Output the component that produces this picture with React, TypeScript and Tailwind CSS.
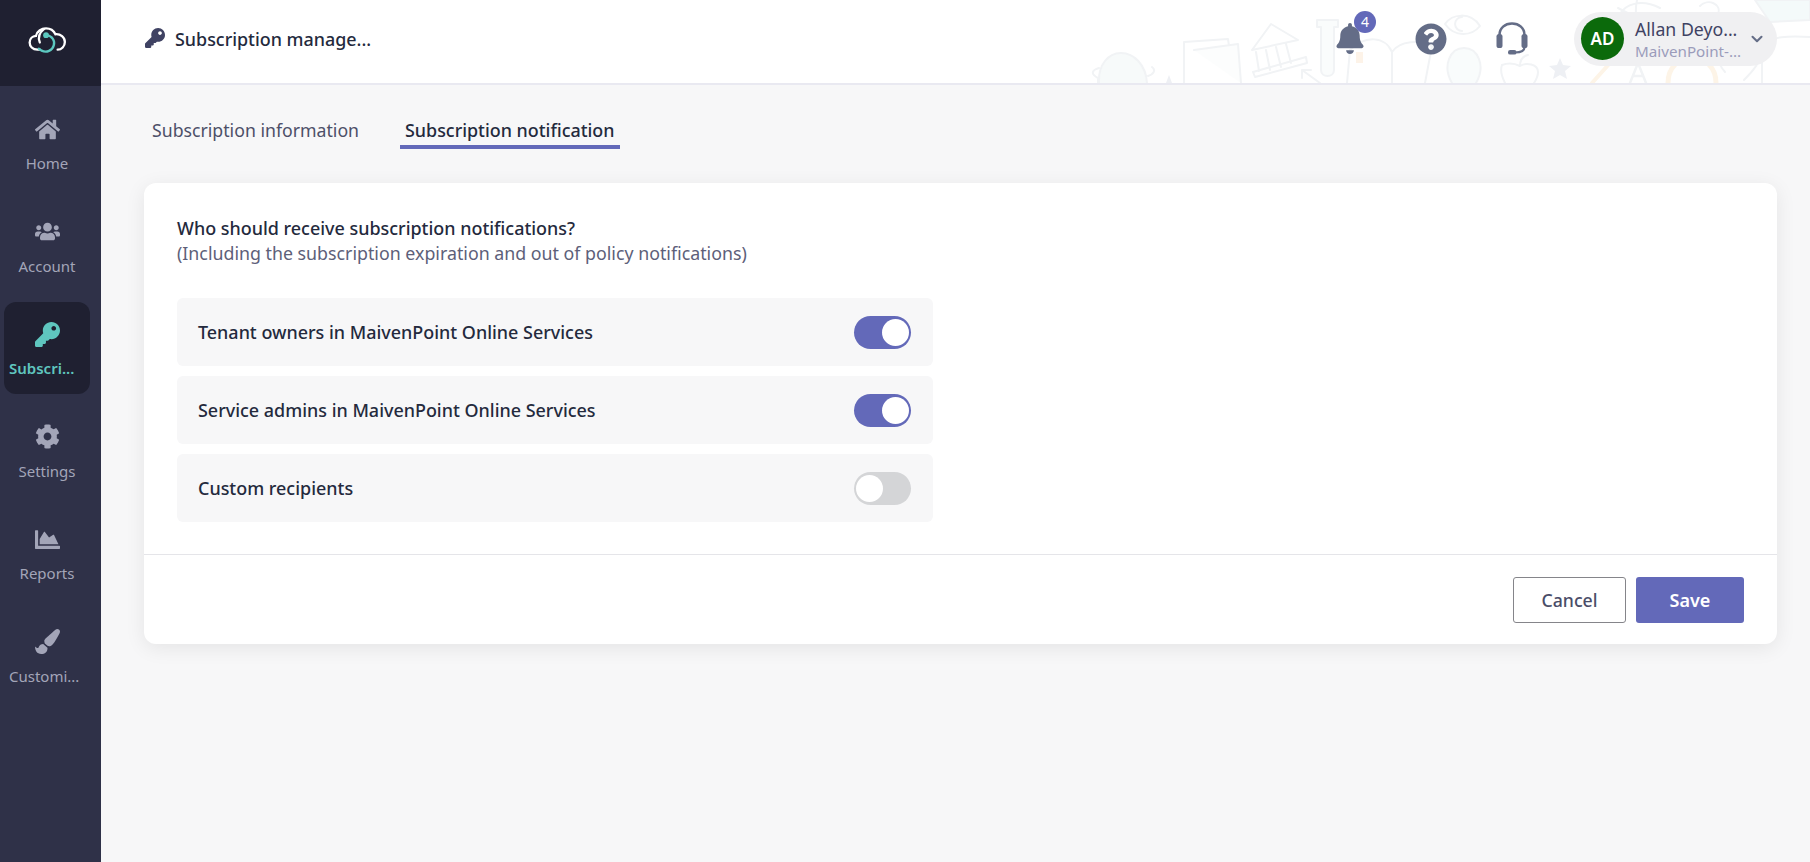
import React from "react";
import { FaHome, FaUsers, FaKey, FaCog, FaChartArea, FaPaintBrush, FaBell, FaQuestionCircle } from "react-icons/fa";
import { LuChevronDown } from "react-icons/lu";

const font = "font-['Noto_Sans','Open_Sans',sans-serif]";

function Logo() {
  return (
    <svg width="39" height="27" viewBox="0 0 40 28" fill="none">
      <path d="M12 23.5 H9.5 C4.5 23.5 1.5 20 1.5 16 C1.5 12 4.5 9.5 8 9.2 C9 4.5 13.5 1.5 18.5 1.5 C23 1.5 26.5 4 28.2 7.5 C33.5 7 38 10.5 38 15.5 C38 20 34.5 23.5 30.5 23.5" stroke="#fff" strokeWidth="2.4" strokeLinecap="round" />
      <path d="M16.5 2 C11.5 6 10 11 12 16" stroke="#fff" strokeWidth="2.4" strokeLinecap="round" />
      <path d="M19 8.5 C25 9.5 28 14 26.5 19 C25 24.5 19 27 14 24.5 L11 22.5" stroke="#5cc8c0" strokeWidth="2.4" strokeLinecap="round" />
      <circle cx="18.5" cy="8.5" r="3" fill="#5cc8c0" />
    </svg>
  );
}

function Headset() {
  return (
    <svg width="32" height="33" viewBox="0 0 32 33" fill="none" className="text-[#646d87] mr-[46px]">
      <path d="M3.5 17 V13 C3.5 6 9 1.5 16 1.5 C23 1.5 28.5 6 28.5 13 V17" stroke="currentColor" strokeWidth="2.6" />
      <rect x="0.5" y="12" width="6" height="14" rx="2.6" fill="currentColor" />
      <rect x="25.5" y="12" width="6" height="14" rx="2.6" fill="currentColor" />
      <path d="M28.5 25 C28.5 29 24 30.5 19 30.5" stroke="currentColor" strokeWidth="2.2" />
      <rect x="12" y="28" width="8.5" height="4.6" rx="2.2" fill="currentColor" />
    </svg>
  );
}

function Doodles() {
  return (
    <svg className="absolute top-0 left-0 pointer-events-none" width="1709" height="83" viewBox="101 0 1709 83" fill="none" strokeWidth="2" strokeLinecap="round" strokeLinejoin="round">
      <g stroke="#f1f3f5">
        <path d="M1098 83 V78 C1090 74 1092 70 1099 68 M1152 67 C1156 70 1154 74 1148 76" />
        <path d="M1099 83 C1098 65 1108 53 1121 53 C1134 53 1146 65 1147 83" fill="#f7fafa" />
        <path d="M1184 83 V42 L1228 39 L1229 46" />
        <path d="M1194 50 L1238 44 L1241 83" fill="#fcfdfd" />
        <path d="M1252 50 L1271 24 L1298 40 L1252 50 M1256 52 L1259 71 M1266 50 L1270 70 M1276 47 L1281 67 M1286 44 L1291 63 M1253 72 L1306 57 L1307 63 L1255 77 Z" />
        <path d="M1302 70 L1320 83 M1302 70 V78 M1302 70 H1311" />
        <path d="M1317 20 H1338 V27 H1334 V70 C1334 78 1321 78 1321 70 V27 H1317 Z" fill="#fafcfc" />
        <path d="M1347 83 L1350 50 C1365 35 1385 36 1392 52 L1392 83 M1392 52 C1400 40 1420 40 1432 46 L1425 83" />
        <path d="M1445 24 C1452 14 1470 11 1480 26 C1472 36 1455 38 1445 24 Z M1462 17 A7 7 0 1 0 1462.1 31" />
        <path d="M1452 83 C1442 66 1450 48 1464 48 C1478 48 1486 66 1476 83" fill="#f9fcfc" />
        <path d="M1502 65 C1510 62 1516 64 1520 66 C1526 62 1538 64 1538 72 C1538 76 1536 80 1534 83 M1505 83 C1501 75 1500 70 1502 65 M1520 66 C1520 60 1523 56 1528 55" />
        <path d="M1620 14 C1625 5 1640 -2 1660 8 M1618 8 C1640 20 1665 30 1678 22 M1637 0 C1633 20 1640 40 1655 48 M1700 6 C1708 -2 1722 4 1718 14 C1716 20 1708 20 1708 28" />
        <path d="M1755 0 H1810 V20 L1770 22 Z" fill="#f4fafa" />
        <path d="M1762 83 V45 C1770 36 1790 36 1810 37" />
        <path d="M1725 72 C1716 62 1716 48 1730 50 C1736 50 1738 55 1738 58 C1742 50 1758 46 1760 56 C1760 64 1748 76 1744 80" />
      </g>
      <path d="M1560 58 L1563 65 L1571 66 L1565 71 L1567 79 L1560 75 L1553 79 L1555 71 L1549 66 L1557 65 Z" fill="#eef0f4" />
      <path d="M1169 75 L1172 83 H1166 Z" fill="#eef0f4" />
      <path d="M1592 83 L1610 63" stroke="#fdf4e7" strokeWidth="4" />
      <path d="M1630 83 L1638 63 L1646 83 M1633 76 H1643" stroke="#f1f3f5" strokeWidth="2.5" />
      <path d="M1668 83 C1668 68 1678 58 1692 58 C1706 58 1716 68 1716 83" stroke="#fdf4e7" strokeWidth="5" />
      <rect x="1356" y="52" width="7" height="11" fill="#fdf3e8" stroke="none" />
    </svg>
  );
}

const nav = [
  { label: "Home", Icon: FaHome, size: 25 },
  { label: "Account", Icon: FaUsers, size: 25 },
  { label: "Subscri...", Icon: FaKey, size: 25, active: true, clipped: true },
  { label: "Settings", Icon: FaCog, size: 25 },
  { label: "Reports", Icon: FaChartArea, size: 25 },
  { label: "Customi...", Icon: FaPaintBrush, size: 25, clipped: true },
];

function Toggle({ on }: { on: boolean }) {
  return on ? (
    <div className="w-[57px] h-[33px] rounded-full bg-[#6369b9] flex items-center justify-end pr-[2px]">
      <div className="w-[27px] h-[27px] rounded-full bg-white" />
    </div>
  ) : (
    <div className="w-[57px] h-[33px] rounded-full bg-[#d4d5d7] flex items-center justify-start pl-[2px]">
      <div className="w-[27px] h-[27px] rounded-full bg-white" />
    </div>
  );
}

function Row({ label, on }: { label: string; on: boolean }) {
  return (
    <div className="w-[756px] h-[68px] rounded-md bg-[#f7f7f8] flex items-center justify-between pl-[21px] pr-[22px]">
      <span className="pt-[2px] text-[17.95px] font-medium text-[#242a3d] leading-none">{label}</span>
      <Toggle on={on} />
    </div>
  );
}

export default function App() {
  return (
    <div className={`${font} w-[1810px] h-[862px] flex bg-[#f7f7f8] overflow-hidden`}>
      <aside className="w-[101px] shrink-0 bg-[#2f3148] flex flex-col">
        <div className="h-[86px] bg-[#1f2031] flex items-center justify-center pb-[6px] pr-[7px]">
          <Logo />
        </div>
        <nav className="flex flex-col gap-[10.6px] pt-[11px] pl-[4px] items-start">
          {nav.map(({ label, Icon, size, active, clipped }) => (
            <div
              key={label}
              className={`w-[86px] h-[92px] rounded-xl flex flex-col items-center pt-[19px] ${active ? "bg-[#1f2031] text-[#5fc6bf]" : "text-[#a3a5b8]"}`}
            >
              <div className="h-[26px] flex items-center justify-center">
                <Icon size={size} />
              </div>
              <span className={`mt-[11px] text-[15px] leading-[20px] whitespace-nowrap ${active ? "font-semibold" : ""} ${clipped ? "self-start ml-[5px]" : ""}`}>{label}</span>
            </div>
          ))}
        </nav>
      </aside>

      <div className="flex-1 flex flex-col min-w-0">
        <header className="relative h-[85px] shrink-0 bg-white border-b-2 border-[#e9e9f1] flex items-center pl-[44px] pr-[33px] pb-[6px] overflow-hidden">
          <Doodles />
          <FaKey size={20} className="relative text-[#3f4263] -mt-[2px]" />
          <span className="relative ml-[10px] pt-[1px] text-[17.9px] font-medium text-[#242a3d]">Subscription manage...</span>
          <div className="relative ml-auto flex items-center">
            <div className="relative mr-[51px] w-[28px] flex justify-center">
              <FaBell size={31} className="text-[#646d87]" />
              <span className="absolute -top-[12px] left-[18px] w-[22px] h-[22px] rounded-full bg-[#6369b9] text-white text-[14px] flex items-center justify-center leading-none">4</span>
            </div>
            <FaQuestionCircle size={32} className="text-[#646d87] mr-[49px]" />
            <Headset />
            <div className="w-[203px] h-[54px] rounded-full bg-[#f0f0f2] flex items-center pl-[7px]">
              <div className="w-[43px] h-[43px] rounded-full bg-[#0b6a0b] text-white font-semibold text-[17px] flex items-center justify-center">AD</div>
              <div className="ml-[11px] w-[104px] pt-[2px] flex flex-col">
                <span className="text-[17.7px] leading-[23px] text-[#3f4263] whitespace-nowrap">Allan Deyo...</span>
                <span className="text-[15.2px] leading-[20px] text-[#9b9cbb] whitespace-nowrap">MaivenPoint-...</span>
              </div>
              <LuChevronDown size={18} strokeWidth={2.75} className="ml-[9px] text-[#646d87]" />
            </div>
          </div>
        </header>

        <main className="flex-1 pl-[43px] pr-[33px] min-h-0">
          <div className="flex items-start pl-[4px] h-[64px] pt-[33px]">
            <div className="w-[252px] pl-[4px] text-[17.7px] leading-[24px] text-[#4d5068] whitespace-nowrap">Subscription information</div>
            <div className="w-[220px] h-[31px] border-b-4 border-[#6369b9] pl-[5px] text-[17.9px] leading-[24px] font-medium text-[#242a3d] whitespace-nowrap">Subscription notification</div>
          </div>
          <section className="mt-[34px] h-[461px] bg-white rounded-xl shadow-[0_4px_20px_rgba(0,0,0,0.08)] flex flex-col">
            <div className="h-[372px] border-b border-[#e5e5e9] pt-[33px] pl-[33px]">
              <div className="text-[17.95px] leading-[25px] font-medium text-[#242a3d]">Who should receive subscription notifications?</div>
              <div className="text-[17.8px] leading-[25px] text-[#5d6079]">(Including the subscription expiration and out of policy notifications)</div>
              <div className="mt-[32px] flex flex-col gap-[10px]">
                <Row label="Tenant owners in MaivenPoint Online Services" on />
                <Row label="Service admins in MaivenPoint Online Services" on />
                <Row label="Custom recipients" on={false} />
              </div>
            </div>
            <div className="flex-1 flex items-start justify-end gap-[10px] pt-[22px] pr-[33px]">
              <button className="w-[113px] h-[46px] rounded-[3px] bg-white border border-[#85858a] text-[17.7px] font-medium text-[#4a4d68]">Cancel</button>
              <button className="w-[108px] h-[46px] rounded-[3px] bg-[#6369b9] text-[18px] font-semibold text-white">Save</button>
            </div>
          </section>
        </main>
      </div>
    </div>
  );
}
